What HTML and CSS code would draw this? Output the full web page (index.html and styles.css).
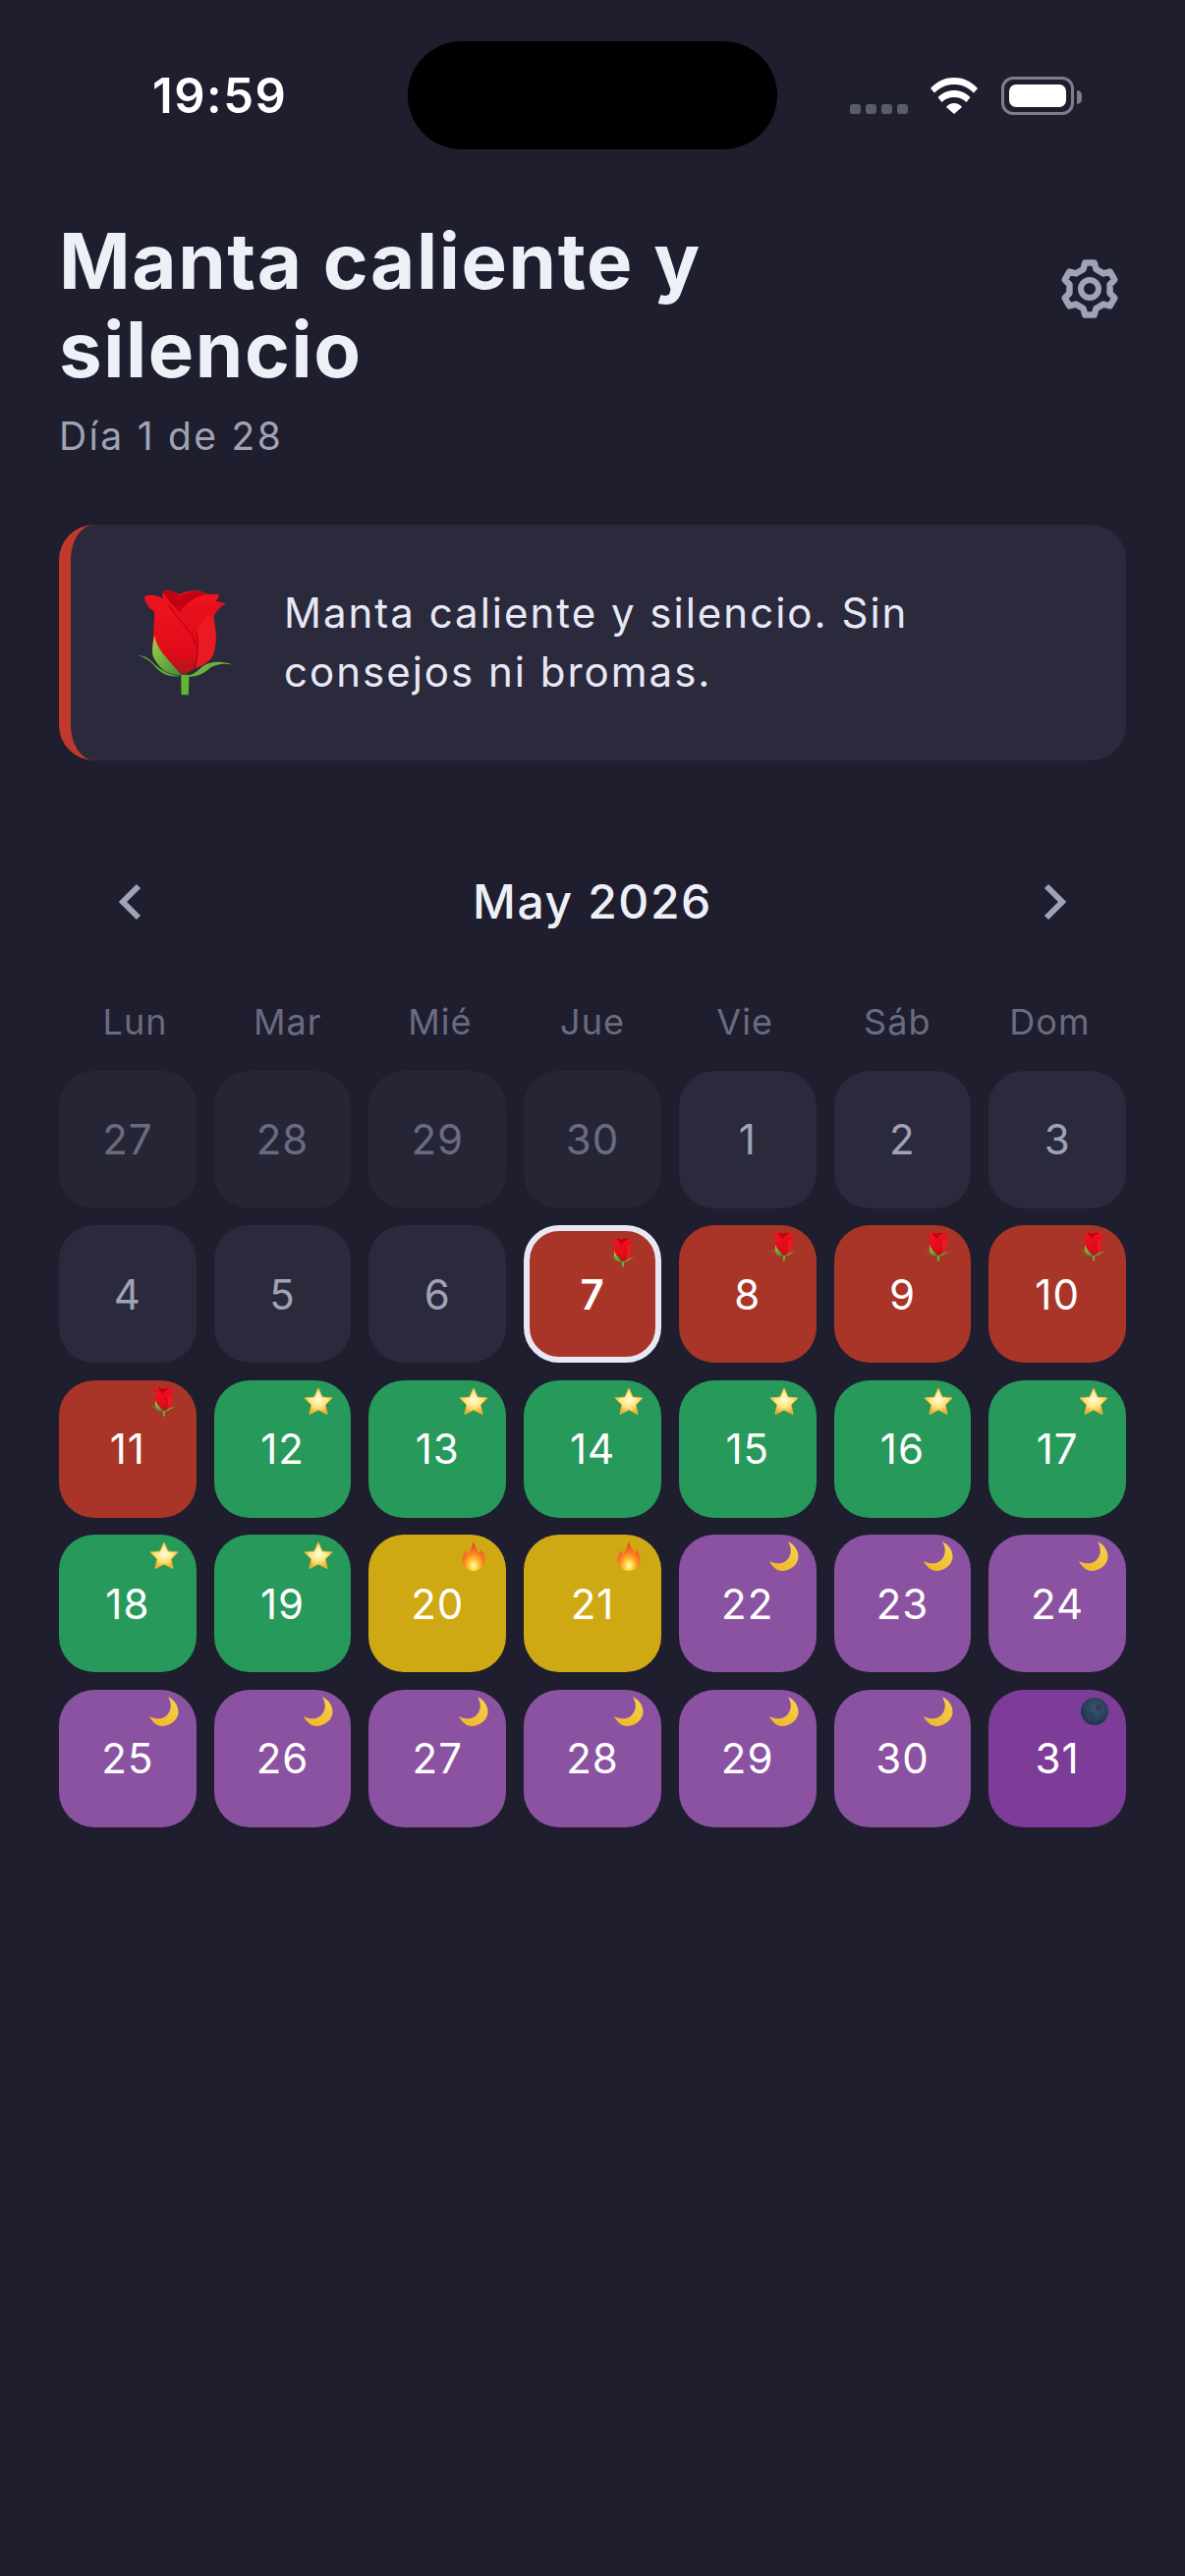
FILE: index.html
```html
<!DOCTYPE html>
<html>
<head>
	<meta charset="utf-8">
	<meta name="viewport" content="width=device-width, initial-scale=1">
	<title>Manta caliente y silencio</title>
	<link rel="stylesheet" href="styles.css">
</head>
<body>
	<!-- shared emoji drawings -->
	<svg class="defs" width="0" height="0" aria-hidden="true">
		<defs>
			<linearGradient id="redBody" x1="0" y1="0" x2="0" y2="1">
				<stop offset="0" stop-color="#ef1420"/>
				<stop offset="0.7" stop-color="#e00a18"/>
				<stop offset="1" stop-color="#a81a1e"/>
			</linearGradient>
			<linearGradient id="leaf" x1="0" y1="0" x2="1" y2="1">
				<stop offset="0" stop-color="#9fd04c"/>
				<stop offset="1" stop-color="#3f8f35"/>
			</linearGradient>
			<radialGradient id="starFill" cx="0.5" cy="0.42" r="0.62">
				<stop offset="0" stop-color="#fffcdc"/>
				<stop offset="0.5" stop-color="#ffe582"/>
				<stop offset="1" stop-color="#ec9a10"/>
			</radialGradient>
			<linearGradient id="moonFill" x1="0.7" y1="0" x2="0.3" y2="1">
				<stop offset="0" stop-color="#f6d24a"/>
				<stop offset="1" stop-color="#f0b92c"/>
			</linearGradient>
			<radialGradient id="darkFill" cx="0.55" cy="0.4" r="0.65">
				<stop offset="0" stop-color="#3d5674"/>
				<stop offset="1" stop-color="#1f3247"/>
			</radialGradient>
			<radialGradient id="fireFill" cx="0.5" cy="0.82" r="0.72">
				<stop offset="0" stop-color="#fffbd0"/>
				<stop offset="0.25" stop-color="#ffd23a"/>
				<stop offset="0.55" stop-color="#fb8a22"/>
				<stop offset="1" stop-color="#ea3f24"/>
			</radialGradient>
			<symbol id="rose" viewBox="295 232 296 330">
				<path fill="#5fb52f" d="M430 495h25l-2 62h-22z"/>
				<path fill="url(#redBody)" d="M318 258C330 248 350 250 375 262C372 250 372 240 385 237C400 238 415 245 425 250C445 240 485 232 505 248C520 252 535 248 546 250C545 260 540 268 535 272C545 272 558 275 567 279C545 290 535 305 530 320C537 360 540 400 530 430C520 455 500 465 475 475C455 490 430 495 410 480C380 470 350 450 342 410C345 370 355 330 350 305C335 295 320 275 318 258Z"/>
				<path fill="#c3000f" d="M375 240C395 235 415 245 428 255C450 240 490 235 505 250C480 255 450 270 425 305C410 285 385 265 375 240Z"/>
				<path fill="#e5101b" d="M567 279C530 275 470 285 430 300C450 320 470 345 478 365C495 320 530 290 567 279Z"/>
				<path fill="#ea1a22" d="M478 365C495 320 520 305 530 320C537 360 540 400 530 430C520 455 500 465 475 475C482 440 484 400 478 365Z"/>
				<path fill="url(#redBody)" d="M350 305C365 280 385 290 395 300C420 330 465 365 475 400C480 440 470 480 445 492C420 495 385 480 360 450C345 420 345 360 350 305Z"/>
				<path fill="none" stroke="#a80010" stroke-width="3" d="M395 285C415 325 465 360 476 405M478 365C484 400 482 440 472 478"/>
				<path fill="url(#leaf)" d="M350 375C355 420 395 450 430 495C395 500 365 480 345 440C340 420 345 395 350 375Z"/>
				<path fill="#5aa83a" d="M298 437C330 433 345 465 375 482C395 495 415 500 430 498C400 506 370 495 350 470C335 452 320 442 298 437Z"/>
				<path fill="#69b23e" d="M588 465C550 450 510 455 490 475C475 490 460 497 445 500C470 505 495 495 515 478C535 462 565 460 588 465Z"/>
			</symbol>
			<symbol id="star" viewBox="0 0 30 30">
				<polygon fill="url(#starFill)" stroke="#f5b93a" stroke-width="1" stroke-linejoin="round" points="15,1 19,10 29,11 22,18 24,27.5 15,23 6,27.5 8,18 1,11 11,10"/>
			</symbol>
			<symbol id="fire" viewBox="0 0 30 30">
				<path fill="url(#fireFill)" d="M15 0C16 5 19 8 21 12C22 10 22.5 9 22.5 8C25.5 12 27 16 26.5 20C26 26 21 30 15 30C9 30 4 26 3.5 20C3 15 6 12 7.5 9C8 11 8.5 12 9.5 13C11 9 14 5 15 0Z"/>
			</symbol>
			<symbol id="moon" viewBox="0 0 30 30">
				<path fill="url(#moonFill)" d="M19 0C27 4 30 11 29.5 17C28 25 20 30 13 30C8 30 3 26 0 20C8 24 16 23 20 16C23 11 22 5 19 0Z"/>
			</symbol>
			<symbol id="newmoon" viewBox="0 0 30 30">
				<circle cx="16" cy="15" r="14" fill="url(#darkFill)"/>
				<circle cx="20" cy="11" r="3.5" fill="#2c4059"/>
				<circle cx="12" cy="19" r="4" fill="#2c4059"/>
			</symbol>
		</defs>
	</svg>

	<div class="statusbar">
		<div class="time">19:59</div>
		<div class="island"></div>
		<div class="status-icons">
			<div class="signal"><i></i><i></i><i></i><i></i></div>
			<svg class="wifi" width="50" height="37" viewBox="0 0 50 37">
				<path fill="#fff" d="M1 11C8 3 17 0 25 0C33 0 42 3 49 11L45 15.5C39 9.5 32 7 25 7C18 7 11 9.5 5 15.5Z"/>
				<path fill="#fff" d="M8.5 20C13 15.5 19 13 25 13C31 13 37 15.5 41.5 20L37.5 25C34 21.5 30 20 25 20C20 20 16 21.5 12.5 25Z"/>
				<path fill="#fff" d="M17 30C19 27.5 22 26 25 26C28 26 31 27.5 33 30L25 37Z"/>
			</svg>
			<div class="battery"><div class="battery-level"></div></div>
		</div>
	</div>

	<div class="header">
		<div>
			<h1 class="title">Manta caliente y silencio</h1>
			<div class="subtitle">Día 1 de 28</div>
		</div>
		<svg class="gear" width="60" height="60" viewBox="0 0 60 60">
			<polygon fill="none" stroke="#a0a3b5" stroke-width="6.5" stroke-linejoin="round" points="23.5,10 25.3,3.4 34.7,3.4 36.5,10 44.07,14.37 50.69,12.63 55.39,20.77 50.57,25.63 50.57,34.37 55.39,39.23 50.69,47.37 44.07,45.63 36.5,50 34.7,56.6 25.3,56.6 23.5,50 15.93,45.63 9.31,47.37 4.61,39.23 9.43,34.37 9.43,25.63 4.61,20.77 9.31,12.63 15.93,14.37"/>
			<circle cx="30" cy="30" r="9" fill="none" stroke="#a0a3b5" stroke-width="6"/>
		</svg>
	</div>

	<div class="card">
		<svg class="card-emoji" width="99" height="110"><use href="#rose"/></svg>
		<p class="card-text">Manta caliente y silencio. Sin consejos ni bromas.</p>
	</div>

	<div class="nav">
		<svg class="chevron" width="24" height="38" viewBox="0 0 24 38"><path d="M21 3L5 19L21 35"/></svg>
		<div class="month">May 2026</div>
		<svg class="chevron" width="24" height="38" viewBox="0 0 24 38"><path d="M3 3L19 19L3 35"/></svg>
	</div>

	<div class="weekdays">
		<div>Lun</div><div>Mar</div><div>Mié</div><div>Jue</div><div>Vie</div><div>Sáb</div><div>Dom</div>
	</div>

	<div class="grid">
		<div class="day other">27</div>
		<div class="day other">28</div>
		<div class="day other">29</div>
		<div class="day other">30</div>
		<div class="day">1</div>
		<div class="day">2</div>
		<div class="day">3</div>

		<div class="day">4</div>
		<div class="day">5</div>
		<div class="day">6</div>
		<div class="day red today">7<svg class="mark"><use href="#rose"/></svg></div>
		<div class="day red">8<svg class="mark"><use href="#rose"/></svg></div>
		<div class="day red">9<svg class="mark"><use href="#rose"/></svg></div>
		<div class="day red">10<svg class="mark"><use href="#rose"/></svg></div>

		<div class="day red">11<svg class="mark"><use href="#rose"/></svg></div>
		<div class="day green">12<svg class="mark"><use href="#star"/></svg></div>
		<div class="day green">13<svg class="mark"><use href="#star"/></svg></div>
		<div class="day green">14<svg class="mark"><use href="#star"/></svg></div>
		<div class="day green">15<svg class="mark"><use href="#star"/></svg></div>
		<div class="day green">16<svg class="mark"><use href="#star"/></svg></div>
		<div class="day green">17<svg class="mark"><use href="#star"/></svg></div>

		<div class="day green">18<svg class="mark"><use href="#star"/></svg></div>
		<div class="day green">19<svg class="mark"><use href="#star"/></svg></div>
		<div class="day yellow">20<svg class="mark"><use href="#fire"/></svg></div>
		<div class="day yellow">21<svg class="mark"><use href="#fire"/></svg></div>
		<div class="day purple">22<svg class="mark"><use href="#moon"/></svg></div>
		<div class="day purple">23<svg class="mark"><use href="#moon"/></svg></div>
		<div class="day purple">24<svg class="mark"><use href="#moon"/></svg></div>

		<div class="day purple">25<svg class="mark"><use href="#moon"/></svg></div>
		<div class="day purple">26<svg class="mark"><use href="#moon"/></svg></div>
		<div class="day purple">27<svg class="mark"><use href="#moon"/></svg></div>
		<div class="day purple">28<svg class="mark"><use href="#moon"/></svg></div>
		<div class="day purple">29<svg class="mark"><use href="#moon"/></svg></div>
		<div class="day purple">30<svg class="mark"><use href="#moon"/></svg></div>
		<div class="day deep">31<svg class="mark"><use href="#newmoon"/></svg></div>
	</div>
</body>
</html>
```

FILE: styles.css
```css
* {
	box-sizing: border-box;
}

body {
	margin: 0;
	width: 1206px;
	height: 2622px;
	overflow: hidden;
	background-color: #1e1e2e;
	font-family: "Inter", "Liberation Sans", sans-serif;
	color: #e8e8f5;
}

.defs {
	position: absolute;
}

/* status bar */
.statusbar {
	display: flex;
	align-items: center;
	height: 110px;
	margin-top: 42px;
}

.time {
	width: 415px;
	padding-left: 155px;
	font-size: 49px;
	font-weight: 600;
	letter-spacing: 1.5px;
	color: #fff;
}

.island {
	width: 376px;
	height: 110px;
	border-radius: 55px;
	background-color: #000;
}

.status-icons {
	display: flex;
	align-items: flex-end;
	margin-left: 74px;
	height: 39px;
}

.signal {
	display: flex;
	gap: 5px;
	margin-bottom: 1px;
}

.signal i {
	display: block;
	width: 11px;
	height: 10px;
	border-radius: 3px;
	background-color: #5a5b6b;
}

.wifi {
	margin: 0 23px 1px 22px;
}

.battery {
	position: relative;
	width: 74px;
	height: 39px;
	padding: 5px;
	border: 3px solid #7e7e8a;
	border-radius: 12px;
}

.battery::after {
	content: "";
	position: absolute;
	left: 74px;
	top: 11px;
	width: 5px;
	height: 14px;
	border-radius: 0 5px 5px 0;
	background-color: #7e7e8a;
}

.battery-level {
	height: 100%;
	border-radius: 7px;
	background-color: #fff;
}

/* header */
.header {
	display: flex;
	justify-content: space-between;
	align-items: flex-start;
	padding: 0 67px 0 60px;
	margin-top: 69px;
}

.title {
	width: 800px;
	margin: 0;
	font-size: 78px;
	line-height: 90px;
	font-weight: 700;
	letter-spacing: 1.6px;
	color: #eef0f8;
}

.subtitle {
	margin-top: 17px;
	font-size: 39px;
	line-height: 51px;
	letter-spacing: 2.3px;
	color: #a0a3b5;
}

.gear {
	margin-top: 43px;
}

/* message card */
.card {
	display: flex;
	align-items: center;
	height: 240px;
	margin: 65px 60px 0;
	padding: 0 60px 0 67px;
	gap: 51px;
	background-color: #2a2a3c;
	border-left: 12px solid #c0392b;
	border-radius: 36px;
}

.card-emoji {
	flex: none;
}

.card-text {
	margin: 0;
	font-size: 42px;
	line-height: 60px;
	letter-spacing: 2px;
	color: #e8e8f5;
}

/* month nav */
.nav {
	display: flex;
	justify-content: space-between;
	align-items: center;
	height: 60px;
	margin-top: 114px;
	padding: 0 120px;
}

.month {
	font-size: 48px;
	line-height: 60px;
	font-weight: 500;
	letter-spacing: 1.6px;
	color: #eef0f8;
}

.chevron {
	fill: none;
	stroke: #a0a3b5;
	stroke-width: 6;
}

/* calendar */
.weekdays {
	display: grid;
	grid-template-columns: repeat(7, 1fr);
	margin: 70px 60px 28px;
	font-size: 36px;
	line-height: 44px;
	letter-spacing: 1px;
	text-align: center;
	color: #6b6b80;
}

.grid {
	display: grid;
	grid-template-columns: repeat(7, 1fr);
	grid-auto-rows: 139.7px;
	gap: 17.8px 18px;
	margin: 0 60px;
}

.day {
	position: relative;
	display: flex;
	justify-content: center;
	align-items: center;
	border-radius: 36px;
	background-color: #2a2a3c;
	font-size: 42px;
	letter-spacing: 1px;
	color: #a0a3b5;
}

.day.other {
	background-color: #252535;
	color: #6b6b80;
}

.day.red,
.day.green,
.day.yellow,
.day.purple,
.day.deep {
	color: #fff;
}

.day.red {
	background-color: #a93529;
}

.day.green {
	background-color: #27995a;
}

.day.yellow {
	background-color: #cfa913;
}

.day.purple {
	background-color: #8a52a0;
}

.day.deep {
	background-color: #7d3c98;
}

.day.today {
	border: 6px solid #e8e8f5;
	font-weight: 600;
}

.mark {
	position: absolute;
	top: 7px;
	right: 18px;
	width: 30px;
	height: 30px;
}
```
